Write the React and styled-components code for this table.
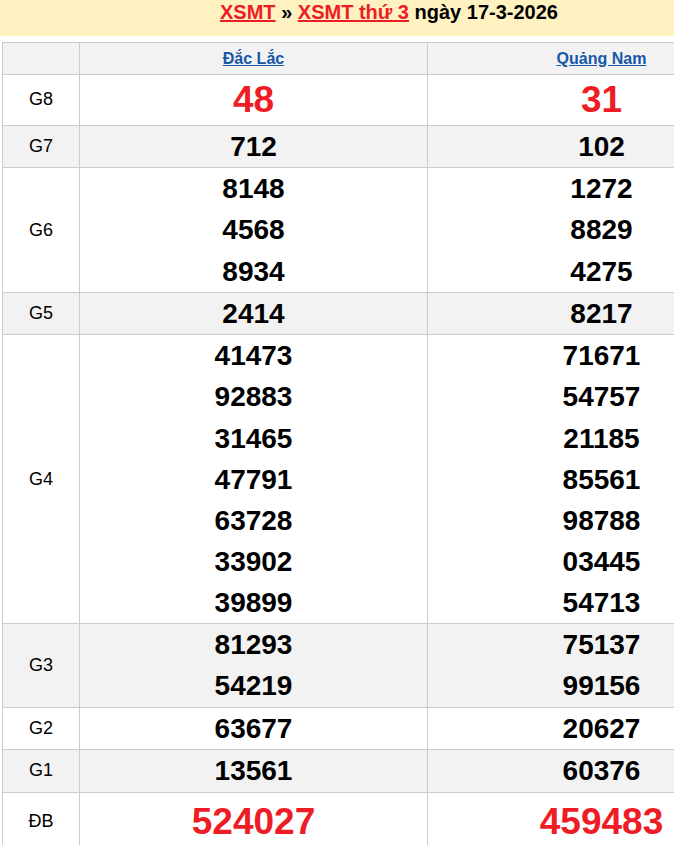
import React from "react";
import styled, { createGlobalStyle } from "styled-components";

const GlobalStyle = createGlobalStyle`
  body {
    margin: 0;
    font-family: "Liberation Sans", Arial, sans-serif;
    background: #fff;
  }
`;

const Page = styled.div`
  width: 778px;
`;

const TitleBar = styled.div`
  background: #fff2c0;
  height: 36px;
  display: flex;
  justify-content: center;
  align-items: flex-start;
  box-sizing: border-box;
`;

const Title = styled.h2`
  margin: 0;
  font-size: 20px;
  font-weight: bold;
  line-height: 24px;
  color: #000;
`;

const TitleLink = styled.a`
  color: #ee1c25;
  text-decoration: underline;
`;

const Table = styled.table`
  margin: 6px 2px 0;
  width: 774px;
  border-collapse: collapse;
  table-layout: fixed;
`;

const Row = styled.tr`
  background: ${(p) => (p.$shade ? "#f2f2f2" : "#fff")};
`;

const Cell = styled.td`
  border: 1px solid #cccccc;
  padding: 0 0 0.3px;
  text-align: center;
  vertical-align: middle;
`;

const LabelCell = styled(Cell)`
  width: 76px;
  font-size: 18px;
  color: #000;
`;

const HeadCell = styled(Cell)`
  height: 31px;
  padding: 0;
  font-size: 16px;
  font-weight: bold;
`;

const HeadLink = styled.a`
  color: #1558a8;
  text-decoration: underline;
`;

const lineHeights = { top: "49.7px", special: "58px" };

const Num = styled.div`
  font-size: ${(p) => (p.$kind ? "37px" : "28px")};
  line-height: ${(p) => lineHeights[p.$kind] || "41.1px"};
  font-weight: bold;
  color: ${(p) => (p.$kind ? "#ee1c25" : "#000")};
`;

const prizes = [
  { label: "G8", kind: "top", a: ["48"], b: ["31"] },
  { label: "G7", a: ["712"], b: ["102"] },
  { label: "G6", a: ["8148", "4568", "8934"], b: ["1272", "8829", "4275"] },
  { label: "G5", a: ["2414"], b: ["8217"] },
  {
    label: "G4",
    a: ["41473", "92883", "31465", "47791", "63728", "33902", "39899"],
    b: ["71671", "54757", "21185", "85561", "98788", "03445", "54713"],
  },
  { label: "G3", a: ["81293", "54219"], b: ["75137", "99156"] },
  { label: "G2", a: ["63677"], b: ["20627"] },
  { label: "G1", a: ["13561"], b: ["60376"] },
  { label: "ĐB", kind: "special", a: ["524027"], b: ["459483"] },
];

export default function App() {
  return (
    <Page>
      <GlobalStyle />
      <TitleBar>
        <Title>
          <TitleLink href="#">XSMT</TitleLink> » <TitleLink href="#">XSMT thứ 3</TitleLink> ngày 17-3-2026
        </Title>
      </TitleBar>
      <Table>
        <tbody>
          <Row $shade>
            <HeadCell style={{ width: 76 }} />
            <HeadCell>
              <HeadLink href="#">Đắc Lắc</HeadLink>
            </HeadCell>
            <HeadCell>
              <HeadLink href="#">Quảng Nam</HeadLink>
            </HeadCell>
          </Row>
          {prizes.map((p, i) => (
            <Row key={p.label} $shade={i % 2 === 1}>
              <LabelCell>{p.label}</LabelCell>
              <Cell>
                {p.a.map((n) => (
                  <Num key={n} $kind={p.kind}>{n}</Num>
                ))}
              </Cell>
              <Cell>
                {p.b.map((n) => (
                  <Num key={n} $kind={p.kind}>{n}</Num>
                ))}
              </Cell>
            </Row>
          ))}
        </tbody>
      </Table>
    </Page>
  );
}
